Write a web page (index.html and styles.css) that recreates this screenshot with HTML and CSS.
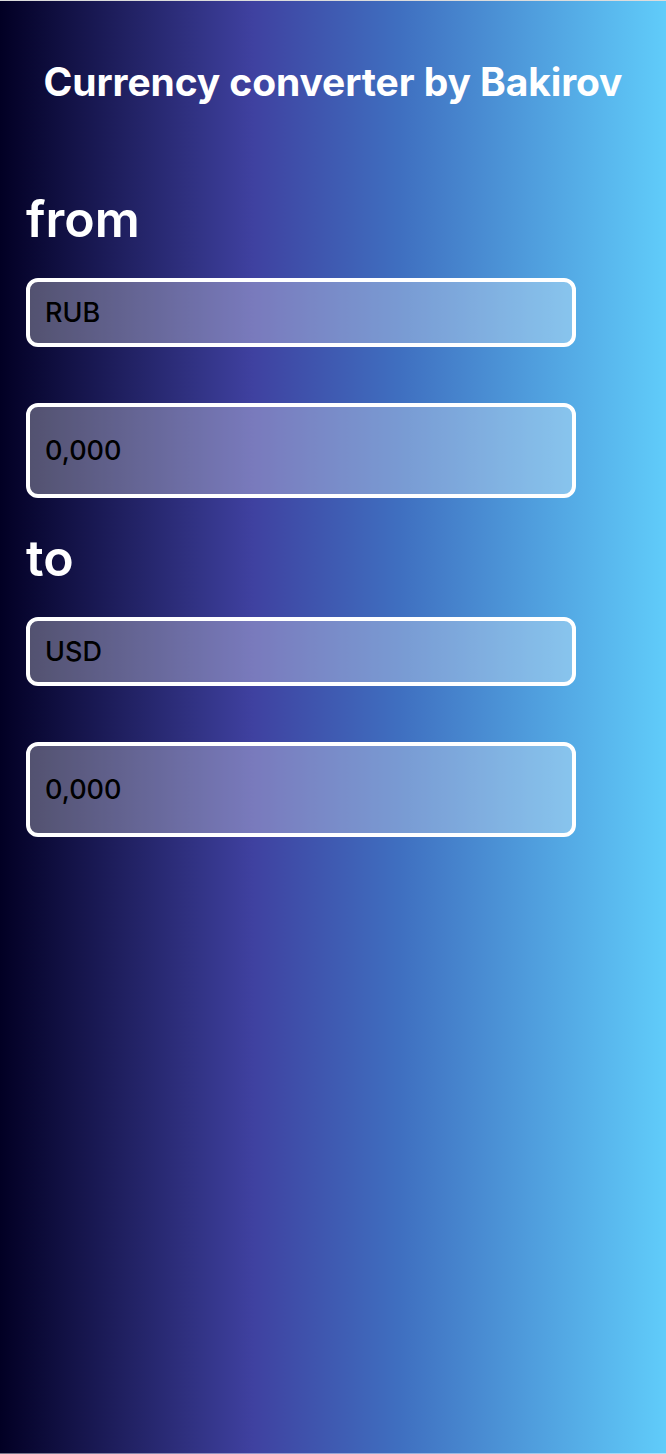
FILE: index.html
```html
<!DOCTYPE html>
<html lang="en">
<head>
<meta charset="utf-8">
<title>Currency converter</title>
<link rel="stylesheet" href="styles.css">
</head>
<body>
<div class="app">
  <h1 class="title">Currency converter by Bakirov</h1>
  <section class="group">
    <h2 class="label">from</h2>
    <div class="field field-select">RUB</div>
    <div class="field field-amount">0,000</div>
  </section>
  <section class="group">
    <h2 class="label label-to">to</h2>
    <div class="field field-select">USD</div>
    <div class="field field-amount">0,000</div>
  </section>
</div>
</body>
</html>
```
FILE: styles.css
```css
html, body {
  margin: 0;
  padding: 0;
}
body {
  font-family: Inter, "Noto Sans", sans-serif;
}
.app {
  box-sizing: border-box;
  min-height: 1454px;
  border-top: 1px solid #dcdcdc;
  border-bottom: 1px solid rgba(255,255,255,0.45);
  background: linear-gradient(90deg, #020024 0%, #3f41a0 38%, #3f6fc0 60%, #60ccfa 100%);
  padding: 0 0 0 26px;
  display: flex;
  flex-direction: column;
}
.title {
  margin: 56px 26px 0 0;
  text-align: center;
  color: #fff;
  font-size: 39px;
  line-height: 50px;
  font-weight: 700;
  letter-spacing: -0.1px;
}
.group {
  display: flex;
  flex-direction: column;
}
.label {
  margin: 0;
  color: #fff;
  font-weight: 600;
  font-size: 50px;
  line-height: 60px;
}
.group:first-of-type .label {
  margin-top: 82px;
  margin-bottom: 29px;
}
.label-to {
  margin-top: 30px !important;
  margin-bottom: 29px !important;
}
.field {
  box-sizing: border-box;
  width: 550px;
  border: 4px solid #fff;
  border-radius: 12px;
  background: rgba(255,255,255,0.3);
  color: #000;
  font-size: 27px;
  font-weight: 500;
  padding: 0 0 0 15px;
  display: flex;
  align-items: center;
}
.field-select {
  height: 69px;
}
.field-amount {
  height: 95px;
  margin-top: 56px;
}
```
